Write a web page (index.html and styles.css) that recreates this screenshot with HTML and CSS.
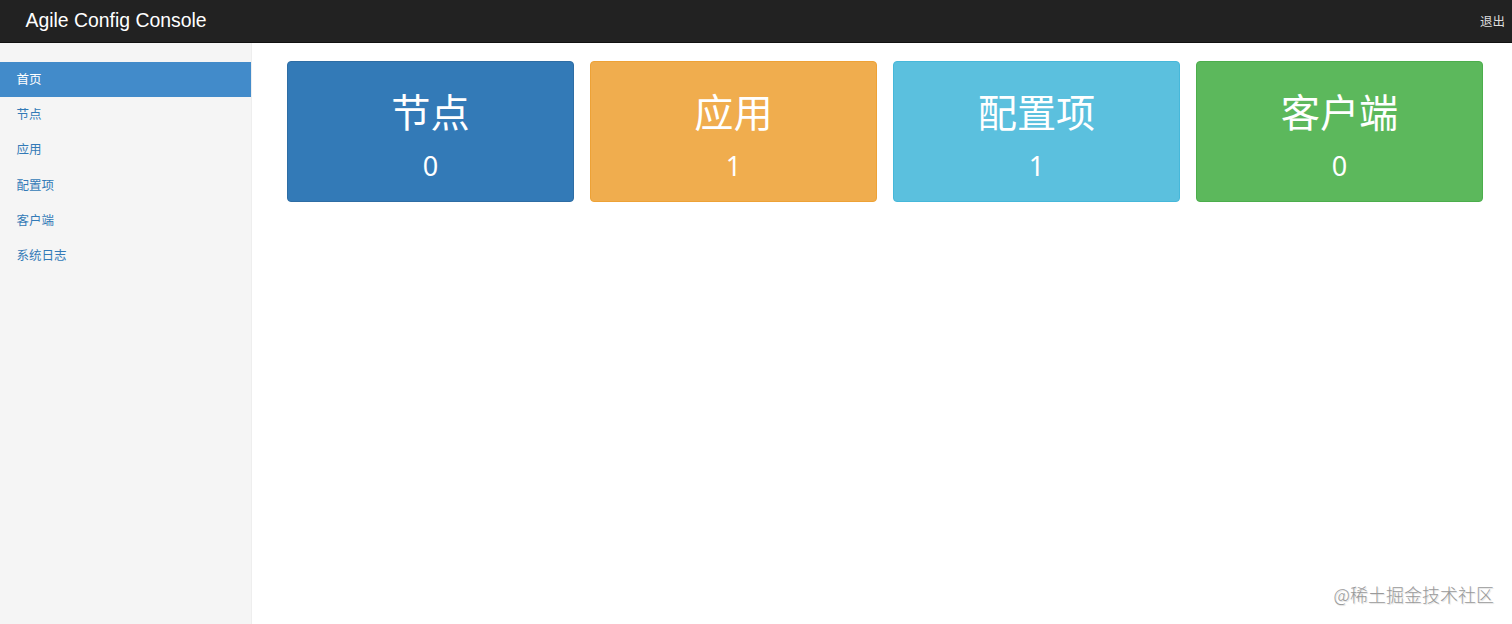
FILE: index.html
```html
<!DOCTYPE html>
<html lang="zh">
<head>
    <meta charset="UTF-8">
    <meta name="viewport" content="width=device-width, initial-scale=1.0">
    <title>Agile Config Console</title>
    <link rel="stylesheet" href="styles.css">
</head>
<body>
    <nav class="navbar">
        <a class="navbar-brand" href="#">Agile Config Console</a>
        <a class="navbar-logout" href="#">退出</a>
    </nav>
    <div class="container">
        <aside class="sidebar">
            <ul class="nav-sidebar">
                <li class="active"><a href="#">首页</a></li>
                <li><a href="#">节点</a></li>
                <li><a href="#">应用</a></li>
                <li><a href="#">配置项</a></li>
                <li><a href="#">客户端</a></li>
                <li><a href="#">系统日志</a></li>
            </ul>
        </aside>
        <main class="main">
            <div class="panel panel-primary">
                <h1>节点</h1>
                <p>0</p>
            </div>
            <div class="panel panel-warning">
                <h1>应用</h1>
                <p>1</p>
            </div>
            <div class="panel panel-info">
                <h1>配置项</h1>
                <p>1</p>
            </div>
            <div class="panel panel-success">
                <h1>客户端</h1>
                <p>0</p>
            </div>
        </main>
    </div>
    <div class="watermark">@稀土掘金技术社区</div>
</body>
</html>
```
FILE: styles.css
```css
* {
    box-sizing: border-box;
    margin: 0;
    padding: 0;
}
body {
    height: 100vh;
    display: flex;
    flex-direction: column;
    overflow: hidden;
    font-family: "Liberation Sans", "Noto Sans CJK SC", sans-serif;
    font-size: 12.5px;
    color: #333;
    background-color: #fff;
}
a {
    color: #337ab7;
    text-decoration: none;
}
.navbar {
    height: 43px;
    flex: none;
    display: flex;
    justify-content: space-between;
    align-items: center;
    padding: 0 7px 1px 25.5px;
    background-color: #222;
    border-bottom: 1px solid #111;
}
.navbar-brand {
    font-size: 19.4px;
    color: #fff;
}
.navbar-logout {
    padding-bottom: 1px;
    color: #ddd;
}
.container {
    flex: 1;
    display: flex;
}
.sidebar {
    width: 252px;
    flex: none;
    padding-top: 19px;
    background-color: #f5f5f5;
    border-right: 1px solid #eee;
}
.nav-sidebar {
    list-style: none;
}
.nav-sidebar a {
    display: block;
    height: 35.2px;
    line-height: 37px;
    padding-left: 16.5px;
}
.nav-sidebar .active a {
    color: #fff;
    background-color: #428bca;
}
.main {
    flex: 1;
    display: grid;
    grid-template-columns: repeat(4, 1fr);
    gap: 16px;
    align-items: start;
    padding: 18px 29px 0 35px;
}
.panel {
    height: 141px;
    padding-top: 24px;
    border: 1px solid;
    border-radius: 4px;
    text-align: center;
    color: #fff;
}
.panel h1 {
    font-size: 39.2px;
    font-weight: 400;
    line-height: 56px;
}
.panel p {
    font-family: "Noto Sans", sans-serif;
    font-size: 27px;
    line-height: 48px;
}
.panel-primary {
    background-color: #337ab7;
    border-color: #2e6da4;
}
.panel-warning {
    background-color: #f0ad4e;
    border-color: #eea236;
}
.panel-info {
    background-color: #5bc0de;
    border-color: #46b8da;
}
.panel-success {
    background-color: #5cb85c;
    border-color: #4cae4c;
}
.watermark {
    position: absolute;
    right: 18px;
    bottom: 17px;
    font-family: "Noto Sans CJK SC", sans-serif;
    font-size: 18px;
    font-weight: 300;
    line-height: 26px;
    color: #999;
    text-shadow: 1px 1px 1px #ddd;
}
```
